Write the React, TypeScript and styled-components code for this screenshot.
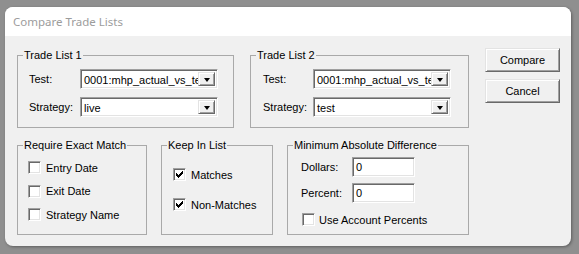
import React from "react";
import styled, { createGlobalStyle } from "styled-components";

const Global = createGlobalStyle`
  html, body { margin: 0; padding: 0; }
  body { background: #8f8f8f; font-family: "Liberation Sans", Arial, sans-serif; }
`;

const Page = styled.div`
  width: 579px;
  height: 254px;
  box-sizing: border-box;
  padding: 7px 0 0 5px;
  background: #8f8f8f;
  overflow: hidden;
`;

const Window = styled.div`
  width: 566px;
  height: 239px;
  background: #f0f0f0;
  border-radius: 8px;
  box-shadow: 1px 1px 3px rgba(0, 0, 0, 0.35);
  display: flex;
  flex-direction: column;
  overflow: hidden;
`;

const TitleBar = styled.div`
  height: 29px;
  flex: none;
  background: #ffffff;
  display: flex;
  align-items: center;
  padding-left: 8px;
  font-family: "Segoe UI", "Noto Sans", sans-serif;
  font-size: 11.5px;
  color: #9c9c9c;
`;

const Body = styled.div`
  padding: 12px 0 0 12px;
  font-size: 11px;
  color: #000;
`;

const Row = styled.div<{ $top?: number }>`
  display: flex;
  align-items: flex-start;
  margin-top: ${(p) => p.$top ?? 0}px;
`;

const Group = styled.div<{
  $w: number;
  $h: number;
  $ml?: number;
  $mt?: number;
  $pt: number;
  $pl: number;
}>`
  position: relative;
  box-sizing: border-box;
  width: ${(p) => p.$w}px;
  height: ${(p) => p.$h}px;
  margin-left: ${(p) => p.$ml ?? 0}px;
  margin-top: ${(p) => p.$mt ?? 0}px;
  padding: ${(p) => p.$pt}px 0 0 ${(p) => p.$pl}px;
  border: 1px solid #a9a9a9;
  flex: none;
`;

const Legend = styled.span`
  position: absolute;
  top: -7px;
  left: 5px;
  padding: 0 1px;
  line-height: 13px;
  background: #f0f0f0;
  white-space: nowrap;
`;

const FormGrid = styled.div<{ $label: number; $field: number; $gap: number }>`
  display: grid;
  grid-template-columns: ${(p) => p.$label}px ${(p) => p.$field}px;
  row-gap: ${(p) => p.$gap}px;
  align-items: center;
`;

const Label = styled.span`
  white-space: nowrap;
  line-height: 13px;
`;

const sunken = `
  box-sizing: border-box;
  background: #ffffff;
  border: 1px solid;
  border-color: #a0a0a0 #ffffff #ffffff #a0a0a0;
  box-shadow: inset 1px 1px 0 #696969, inset -1px -1px 0 #e3e3e3;
`;

const Combo = styled.div`
  ${sunken}
  height: 20px;
  padding: 2px;
  display: flex;
  align-items: stretch;
`;

const ComboText = styled.div`
  flex: 1;
  overflow: hidden;
  white-space: nowrap;
  line-height: 16px;
  padding-left: 1px;
`;

const DropButton = styled.div`
  flex: none;
  width: 17px;
  box-sizing: border-box;
  background: #f0f0f0;
  border: 1px solid;
  border-color: #e3e3e3 #696969 #696969 #e3e3e3;
  box-shadow: inset 1px 1px 0 #ffffff, inset -1px -1px 0 #a0a0a0;
  display: flex;
  align-items: center;
  justify-content: center;
`;

const Arrow = styled.div`
  width: 0;
  height: 0;
  border-left: 3.5px solid transparent;
  border-right: 3.5px solid transparent;
  border-top: 4px solid #000;
  margin-top: 1px;
`;

const TextField = styled.div`
  ${sunken}
  width: 63px;
  height: 20px;
  padding: 2px 3px;
  line-height: 15px;
`;

const ButtonColumn = styled.div`
  display: flex;
  flex-direction: column;
  gap: 7px;
  margin-left: 16px;
`;

const Button = styled.div`
  box-sizing: border-box;
  width: 75px;
  height: 24px;
  background: #f0f0f0;
  border: 1px solid;
  border-color: #e3e3e3 #696969 #696969 #e3e3e3;
  box-shadow: inset 1px 1px 0 #ffffff, inset -1px -1px 0 #a0a0a0;
  display: flex;
  align-items: center;
  justify-content: center;
  font-size: 11px;
  color: #000;
`;

const CheckList = styled.div<{ $gap: number }>`
  display: flex;
  flex-direction: column;
  gap: ${(p) => p.$gap}px;
`;

const CheckRow = styled.div<{ $gap?: number; $mt?: number; $ml?: number }>`
  display: flex;
  align-items: center;
  gap: ${(p) => p.$gap ?? 5}px;
  height: 13px;
  margin-top: ${(p) => p.$mt ?? 0}px;
  margin-left: ${(p) => p.$ml ?? 0}px;
  white-space: nowrap;
`;

const Box = styled.div`
  ${sunken}
  width: 13px;
  height: 13px;
  flex: none;
  display: flex;
  align-items: center;
  justify-content: center;
`;

const Check = () => (
  <svg width="7" height="7" viewBox="0 0 7 7" shapeRendering="crispEdges">
    <path
      d="M0 2h1v3h-1z M1 3h1v3h-1z M2 4h1v3h-1z M3 3h1v3h-1z M4 2h1v3h-1z M5 1h1v3h-1z M6 0h1v3h-1z"
      fill="#000"
    />
  </svg>
);

const CheckItem = ({
  label,
  checked,
  gap,
  mt,
  ml,
}: {
  label: string;
  checked?: boolean;
  gap?: number;
  mt?: number;
  ml?: number;
}) => (
  <CheckRow $gap={gap} $mt={mt} $ml={ml}>
    <Box>{checked && <Check />}</Box>
    <span>{label}</span>
  </CheckRow>
);

const ComboBox = ({ value }: { value: string }) => (
  <Combo>
    <ComboText>{value}</ComboText>
    <DropButton>
      <Arrow />
    </DropButton>
  </Combo>
);

export default function App() {
  return (
    <Page>
      <Global />
      <Window>
        <TitleBar>Compare Trade Lists</TitleBar>
        <Body>
          <Row>
            <Group $w={217} $h={73} $mt={7} $pt={13} $pl={11}>
              <Legend>Trade List 1</Legend>
              <FormGrid $label={51} $field={138} $gap={8}>
                <Label>Test:</Label>
                <ComboBox value="0001:mhp_actual_vs_test" />
                <Label>Strategy:</Label>
                <ComboBox value="live" />
              </FormGrid>
            </Group>
            <Group $w={219} $h={73} $mt={7} $ml={16} $pt={13} $pl={12}>
              <Legend>Trade List 2</Legend>
              <FormGrid $label={50} $field={138} $gap={8}>
                <Label>Test:</Label>
                <ComboBox value="0001:mhp_actual_vs_test" />
                <Label>Strategy:</Label>
                <ComboBox value="test" />
              </FormGrid>
            </Group>
            <ButtonColumn>
              <Button>Compare</Button>
              <Button>Cancel</Button>
            </ButtonColumn>
          </Row>
          <Row $top={17}>
            <Group $w={130} $h={90} $pt={15} $pl={10}>
              <Legend>Require Exact Match</Legend>
              <CheckList $gap={10.5}>
                <CheckItem label="Entry Date" />
                <CheckItem label="Exit Date" />
                <CheckItem label="Strategy Name" />
              </CheckList>
            </Group>
            <Group $w={112} $h={90} $ml={14} $pt={22} $pl={11}>
              <Legend>Keep In List</Legend>
              <CheckList $gap={17}>
                <CheckItem label="Matches" checked />
                <CheckItem label="Non-Matches" checked />
              </CheckList>
            </Group>
            <Group $w={182} $h={90} $ml={14} $pt={11} $pl={13}>
              <Legend>Minimum Absolute Difference</Legend>
              <FormGrid $label={51} $field={63} $gap={6}>
                <Label>Dollars:</Label>
                <TextField>0</TextField>
                <Label>Percent:</Label>
                <TextField>0</TextField>
              </FormGrid>
              <CheckItem label="Use Account Percents" gap={4} mt={10} ml={1} />
            </Group>
          </Row>
        </Body>
      </Window>
    </Page>
  );
}
